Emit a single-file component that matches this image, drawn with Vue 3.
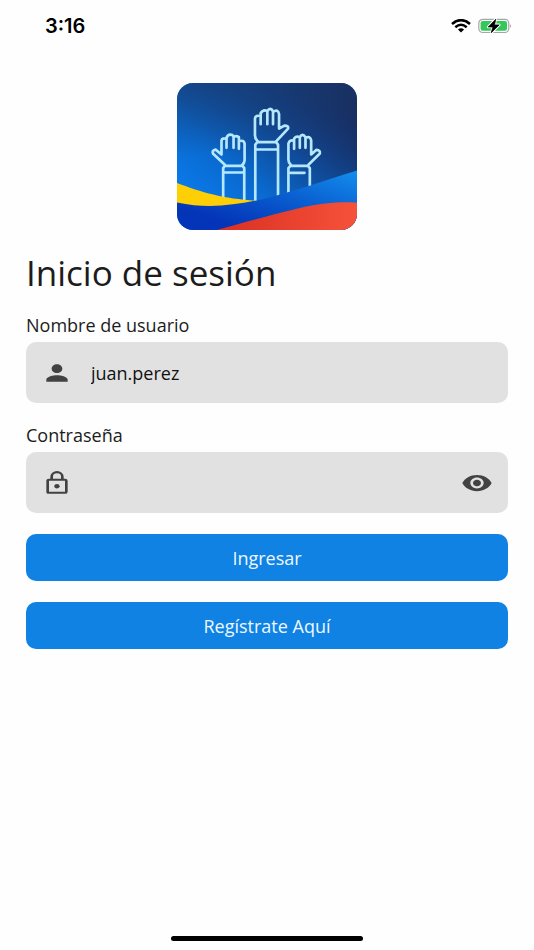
<script setup>
import { ref } from 'vue'

const username = ref('juan.perez')
const password = ref('')
const showPassword = ref(false)
</script>

<template>
  <div class="screen">
    <header class="status">
      <time class="clock">3:16</time>
      <div class="indicators">
        <svg class="wifi" viewBox="0 0 20 14" aria-hidden="true">
          <path d="M1 5 Q10 -2.6 19 5" stroke-width="2.7" />
          <path d="M4.3 8.2 Q10 3.4 15.7 8.2" stroke-width="2.5" />
          <path class="dot" d="M6.9 10.5 Q10 8 13.1 10.5 L10 13.6 Z" />
        </svg>
        <svg class="battery" viewBox="0 0 34 16" aria-hidden="true">
          <rect x="0.8" y="1.3" width="30" height="13.2" rx="4" fill="#fff" stroke="#a6a6a6" stroke-width="1.2" />
          <rect x="2.6" y="3" width="26.4" height="9.8" rx="2.2" fill="#34c759" />
          <path d="M32.2 6 Q34 8 32.2 10 Z" fill="#8c8c8c" />
          <path d="M17.8 1.2 L10.2 9 H14.9 L13.2 14.8 L21.2 6.9 H16.5 Z" fill="#000" stroke="#fff" stroke-width="2.6" stroke-linejoin="round" />
          <path d="M17.8 1.2 L10.2 9 H14.9 L13.2 14.8 L21.2 6.9 H16.5 Z" fill="#000" stroke="#000" stroke-width=".7" stroke-linejoin="round" />
        </svg>
      </div>
    </header>

    <main class="content">
      <svg class="logo" viewBox="21 21 538 442" preserveAspectRatio="none" role="img" aria-label="Logo">
        <defs>
          <linearGradient id="sky" x1="0.1" y1="0.85" x2="0.95" y2="0">
            <stop offset="0" stop-color="#0a7cee" />
            <stop offset="0.3" stop-color="#0a68cc" />
            <stop offset="0.62" stop-color="#124289" />
            <stop offset="1" stop-color="#1b1b42" />
          </linearGradient>
          <linearGradient id="shade" x1="0" y1="0" x2="0" y2="1">
            <stop offset="0" stop-color="#173f78" stop-opacity="0.65" />
            <stop offset="0.5" stop-color="#173f78" stop-opacity="0" />
          </linearGradient>
          <linearGradient id="wave" x1="0" y1="1" x2="1" y2="0">
            <stop offset="0.2" stop-color="#0435b8" />
            <stop offset="0.6" stop-color="#0a5fd0" />
            <stop offset="1" stop-color="#138eee" />
          </linearGradient>
          <linearGradient id="red" x1="0" y1="0" x2="1" y2="0">
            <stop offset="0" stop-color="#d92f22" />
            <stop offset="1" stop-color="#f6523a" />
          </linearGradient>
        </defs>
        <rect x="21" y="21" width="538" height="442" fill="url(#sky)" />
        <rect x="21" y="21" width="538" height="442" fill="url(#shade)" />

        <g class="hands">
          <path d="M159 370 V277 L164 270 H217 L222 277 V375 M159 290 H222" />
          <path d="M164 267 L129 234 Q124 224 136 221 L154 236 V194 Q156 185 169 189 V216 M169 189 Q170 176 181 176 Q192 176 190 190 V216 M190 184 Q196 177 206 184 V219 M206 196 Q221 191 223 203 V254 Q222 263 216 267" />
          <path d="M255 380 V206 L261 199 H317 L323 206 V360 M255 221 H323" />
          <path d="M262 196 Q254 188 254 178 V128 Q256 116 271 121 V145 M271 121 V112 Q278 100 291 105 V145 M291 105 Q300 92 308 106 V145 M308 108 Q323 98 326 114 V158 L342 149 Q355 149 353 158 L318 196" />
          <path d="M354 350 V277 L360 270 H412 L418 277 V330 M360 291 H402" />
          <path d="M361 267 Q354 261 354 252 V203 Q358 190 371 195 V219 M371 195 V188 Q378 179 388 184 V216 M388 184 Q396 170 405 184 V216 M405 186 Q419 179 422 193 V236 L438 222 Q450 223 448 233 L414 267" />
        </g>

        <path d="M21 322 C95 350 160 370 260 375 L230 400 L21 400 Z" fill="#ffcf05" />
        <path d="M21 380 C110 399 185 390 275 371 C380 344 460 315 559 284 V463 H21 Z" fill="url(#wave)" />
        <path d="M140 463 C220 440 290 421 370 401 C440 384 500 377 559 381 V463 Z" fill="url(#red)" />
      </svg>

      <h1 class="title">Inicio de sesión</h1>

      <form class="form" @submit.prevent>
        <div class="group">
          <label class="label" for="username">Nombre de usuario</label>
          <div class="field">
            <svg class="icon" viewBox="0 0 24 24" preserveAspectRatio="none" aria-hidden="true">
              <path d="M12 12c2.21 0 4-1.79 4-4s-1.79-4-4-4-4 1.79-4 4 1.79 4 4 4zm0 2c-2.67 0-8 1.34-8 4v2h16v-2c0-2.66-5.33-4-8-4z" />
            </svg>
            <input id="username" v-model="username" class="input" type="text" autocomplete="username" />
          </div>
        </div>

        <div class="group">
          <label class="label" for="password">Contraseña</label>
          <div class="field">
            <svg class="icon" viewBox="0 0 24 24" preserveAspectRatio="none" aria-hidden="true">
              <path class="line" d="M8 9V6a4 4 0 0 1 8 0v3" />
              <rect class="line" x="5" y="9" width="14" height="12" rx="1" />
              <circle cx="12" cy="15" r="2" />
            </svg>
            <input
              id="password"
              v-model="password"
              class="input"
              :type="showPassword ? 'text' : 'password'"
              autocomplete="current-password"
            />
            <button class="reveal" type="button" aria-label="Mostrar contraseña" @click="showPassword = !showPassword">
              <svg class="icon" viewBox="0 0 24 24" preserveAspectRatio="none" aria-hidden="true">
                <path d="M12 4.5C7 4.5 2.73 7.61 1 12c1.73 4.39 6 7.5 11 7.5s9.27-3.11 11-7.5c-1.73-4.39-6-7.5-11-7.5zM12 17c-2.76 0-5-2.24-5-5s2.24-5 5-5 5 2.24 5 5-2.24 5-5 5zm0-8c-1.66 0-3 1.34-3 3s1.34 3 3 3 3-1.34 3-3-1.34-3-3-3z" />
              </svg>
            </button>
          </div>
        </div>

        <button class="button" type="submit">Ingresar</button>
        <button class="button" type="button">Regístrate Aquí</button>
      </form>
    </main>

    <footer class="home"><span class="home-bar"></span></footer>
  </div>
</template>

<style>
body {
  margin: 0;
  background: #fefefe;
}
</style>

<style scoped>
.screen {
  box-sizing: border-box;
  min-height: 100vh;
  display: flex;
  flex-direction: column;
  background: #fefefe;
  color: #1c1c1c;
  font-family: "Open Sans", "Noto Sans", sans-serif;
}

.status {
  display: flex;
  align-items: center;
  justify-content: space-between;
  height: 52px;
  padding: 0 22px 0 45px;
}

.clock {
  font-family: Inter, sans-serif;
  font-size: 20px;
  font-weight: 600;
  color: #000;
}

.indicators {
  display: flex;
  align-items: center;
  gap: 7px;
}

.wifi {
  width: 20px;
  height: 14px;
  fill: none;
  stroke: #000;
}

.wifi .dot {
  fill: #000;
  stroke: none;
}

.battery {
  width: 34px;
  height: 16px;
}

.content {
  flex: 1;
  display: flex;
  flex-direction: column;
  padding: 31px 26px 0;
}

.logo {
  align-self: center;
  width: 180px;
  height: 147px;
  border-radius: 16px;
}

.hands {
  fill: none;
  stroke: #b5e8ff;
  stroke-width: 8;
  stroke-linecap: round;
  stroke-linejoin: round;
}

.title {
  margin: 21px 0 19px;
  font-size: 35px;
  line-height: 44px;
  font-weight: 400;
}

.form {
  display: flex;
  flex-direction: column;
  gap: 21px;
}

.group {
  display: flex;
  flex-direction: column;
  gap: 5px;
}

.label {
  font-size: 18px;
  line-height: 23px;
}

.field {
  display: flex;
  align-items: center;
  gap: 18px;
  height: 61px;
  padding: 0 15px;
  border-radius: 10px;
  background: #e1e1e1;
}

.icon {
  display: block;
  flex: none;
  width: 32px;
  height: 26px;
  fill: #424242;
}

.line {
  fill: none;
  stroke: #424242;
  stroke-width: 2;
}

.input {
  flex: 1;
  min-width: 0;
  height: 40px;
  padding: 0;
  border: 0;
  outline: 0;
  background: transparent;
  color: #111;
  font: inherit;
  font-size: 18px;
}

.reveal {
  padding: 0;
  border: 0;
  background: transparent;
  cursor: pointer;
}

.button {
  height: 47px;
  padding: 0 16px;
  border: 0;
  border-radius: 10px;
  background: #0f82e3;
  color: #eef7ff;
  font: inherit;
  font-size: 18px;
  cursor: pointer;
}

.home {
  display: flex;
  justify-content: center;
  padding: 8px 0 9px;
}

.home-bar {
  width: 36%;
  height: 5px;
  border-radius: 3px;
  background: #000;
}
</style>
